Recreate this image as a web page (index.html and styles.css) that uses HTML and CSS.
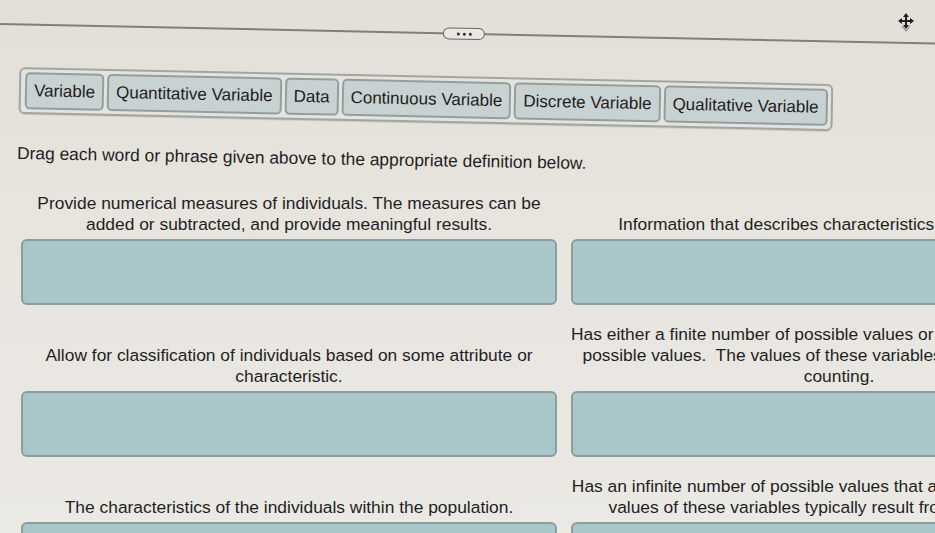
FILE: index.html
```html
<!DOCTYPE html>
<html lang="en">
<head>
<meta charset="utf-8">
<title>Drag and drop definitions</title>
<link rel="stylesheet" href="styles.css">
</head>
<body>
<div class="page">
  <header class="top">
    <div class="divider">
      <span class="handle"><i></i><i></i><i></i></span>
    </div>
    <svg class="move" width="18" height="20" viewBox="0 0 18 20" aria-hidden="true">
      <path d="M9 1 L12 5 H10 V8 H13 V6 L17 9 L13 12 V10 H10 V13 H12 L9 17 L6 13 H8 V10 H5 V12 L1 9 L5 6 V8 H8 V5 H6 Z" fill="#1e1e1e"/>
      <path d="M5 14 L9 19 L13 14" fill="none" stroke="#8a8a88" stroke-width="1.2"/>
    </svg>
  </header>

  <section class="tray">
    <span class="chip">Variable</span>
    <span class="chip">Quantitative Variable</span>
    <span class="chip">Data</span>
    <span class="chip">Continuous Variable</span>
    <span class="chip">Discrete Variable</span>
    <span class="chip">Qualitative Variable</span>
  </section>

  <p class="instructions">Drag each word or phrase given above to the appropriate definition below.</p>

  <section class="targets">
    <div class="target">
      <p class="def">Provide numerical measures of individuals. The measures can be<br>added or subtracted, and provide meaningful results.</p>
      <div class="drop"></div>
    </div>
    <div class="target">
      <p class="def">Information that describes characteristics of an individual.</p>
      <div class="drop"></div>
    </div>
    <div class="target">
      <p class="def">Allow for classification of individuals based on some attribute or<br>characteristic.</p>
      <div class="drop"></div>
    </div>
    <div class="target">
      <p class="def">Has either a finite number of possible values or a countable number of<br>possible values.&nbsp; The values of these variables typically result from<br>counting.</p>
      <div class="drop"></div>
    </div>
    <div class="target">
      <p class="def">The characteristics of the individuals within the population.</p>
      <div class="drop"></div>
    </div>
    <div class="target">
      <p class="def">Has an infinite number of possible values that are not countable.&nbsp; The<br>values of these variables typically result from measurement.</p>
      <div class="drop"></div>
    </div>
  </section>
</div>
</body>
</html>
```
FILE: styles.css
```css
html, body {
  margin: 0;
  padding: 0;
  overflow: hidden;
}
body {
  background: linear-gradient(180deg, #e2dfd9 0%, #e7e4de 35%, #ebe9e4 100%);
  font-family: "Liberation Sans", Arial, sans-serif;
  color: #1f1f1f;
  width: 935px;
  height: 533px;
}
.page {
  width: 1140px;
}
.top {
  position: relative;
  height: 67px;
  padding-top: 23px;
  box-sizing: border-box;
}
.divider {
  height: 2px;
  background: #7f7f7b;
  width: 960px;
  display: flex;
  align-items: center;
  transform: rotate(1.2deg);
  transform-origin: 0 50%;
}
.handle {
  display: flex;
  gap: 3px;
  justify-content: center;
  align-items: center;
  width: 40px;
  height: 10px;
  border: 1.5px solid #666663;
  border-radius: 7px;
  background: #e9e7e2;
  margin-left: 443px;
}
.handle i {
  width: 3px;
  height: 3px;
  border-radius: 50%;
  background: #333;
}
.move {
  position: absolute;
  left: 897px;
  top: 12px;
}
.tray {
  display: inline-flex;
  gap: 3px;
  margin-left: 19px;
  padding: 3px 3px 3px 4px;
  border: 2px solid #a2a5a2;
  border-radius: 6px;
  background: #e4e3de;
  box-shadow: 0 1px 0 #cfcdc8;
  transform: rotate(1.2deg);
  transform-origin: 0 50%;
}
.chip {
  display: inline-block;
  font-size: 17px;
  line-height: 20px;
  padding: 7px 7px 6px;
  background: #c9d2d2;
  border: 2px solid #939e9e;
  border-radius: 5px;
  color: #1d1d1d;
}
.instructions {
  margin: 29px 0 0 17px;
  font-size: 17.4px;
  line-height: 20px;
  transform: rotate(1deg);
  transform-origin: 0 50%;
}
.targets {
  display: grid;
  grid-template-columns: 536px 536px;
  column-gap: 14px;
  row-gap: 19px;
  margin: 30px 0 0 21px;
}
.target {
  display: flex;
  flex-direction: column;
  justify-content: flex-end;
  min-width: 0;
}
.def {
  margin: 0 0 4px;
  text-align: center;
  font-size: 17.4px;
  line-height: 21px;
  white-space: nowrap;
}
.drop {
  height: 62px;
  background: #a9c6c9;
  border: 2px solid #8c9d9f;
  border-radius: 6px;
}
```
